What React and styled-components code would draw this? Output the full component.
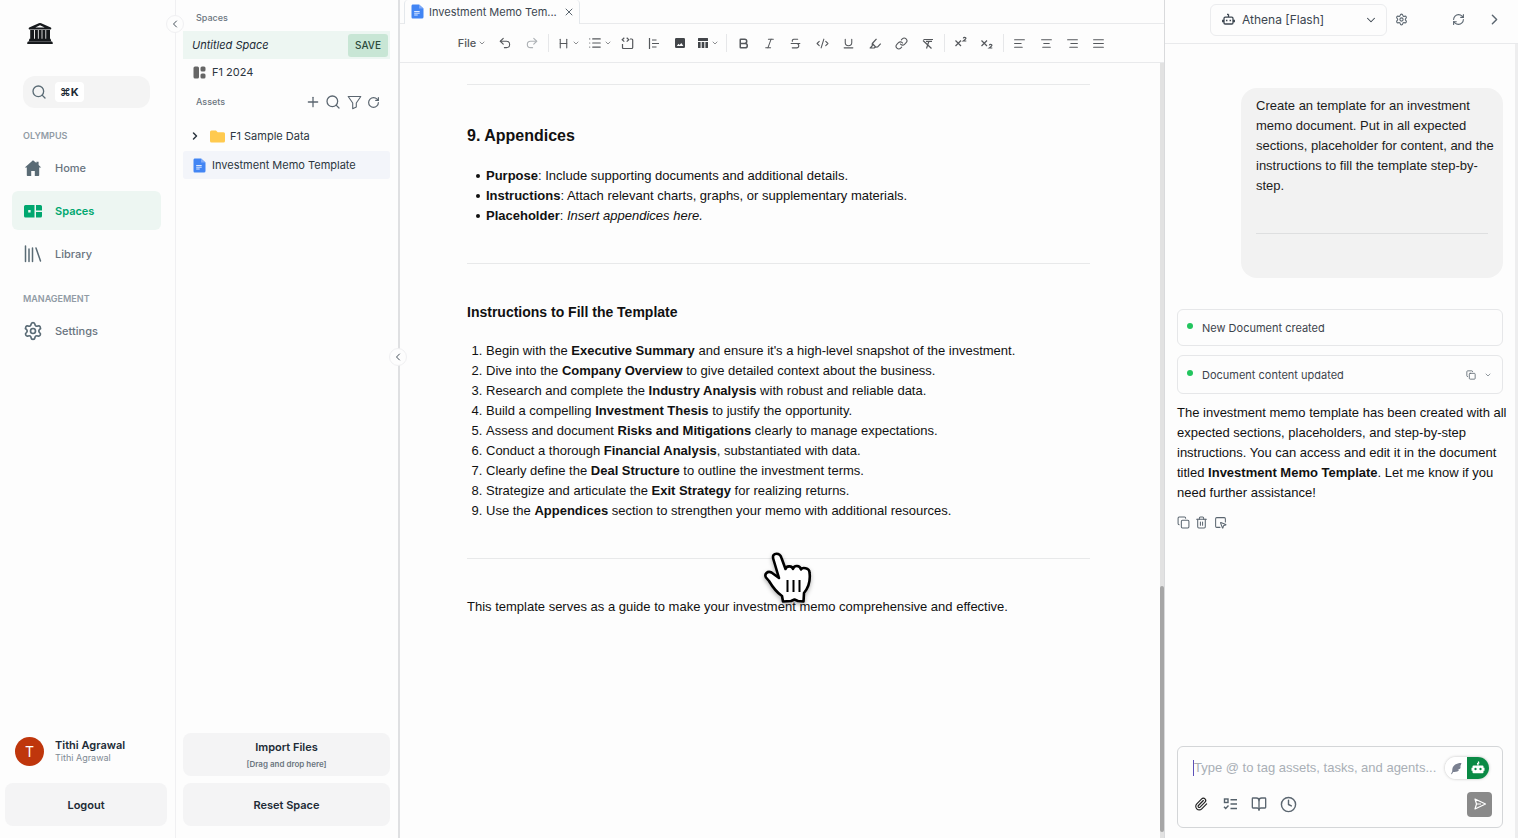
import React from 'react';
import styled, { createGlobalStyle, css } from 'styled-components';
import {
  Search, Plus, RotateCw, ChevronLeft, ChevronRight, ChevronDown, X, Settings,
  RefreshCw, Copy, Trash2, SquareMousePointer, Paperclip, BookOpen, Clock,
  Bold, Italic, Strikethrough, Underline, AlignLeft, AlignCenter, AlignRight,
  AlignJustify, List, CodeXml, Undo2, Redo2, Link, Heading,
} from 'lucide-react';

const ui = `Inter, "Liberation Sans", sans-serif`;
const prose = `"Liberation Sans", Arial, sans-serif`;

const GlobalStyle = createGlobalStyle`
  *, *::before, *::after { box-sizing: border-box; }
  body { margin: 0; background: #fdfdfd; font-family: ${ui}; color: #212b36; }
  button { font-family: inherit; color: inherit; cursor: pointer; }
  h1, h2, h3, p, ul, ol { margin: 0; }
  svg { flex: none; }
`;

const Shell = styled.div`
  display: grid;
  grid-template-columns: 176px 224px minmax(0, 1fr) 354px;
  height: 100vh;
  overflow: hidden;
`;

const IconButton = styled.button`
  display: inline-flex;
  align-items: center;
  justify-content: center;
  width: ${(p) => p.$w || 20}px;
  height: ${(p) => p.$h || 20}px;
  padding: 0;
  border: 0;
  background: none;
  color: #5b6670;
  flex: none;
`;

/* ---------- navigation ---------- */

const Nav = styled.nav`
  position: relative;
  display: flex;
  flex-direction: column;
  border-right: 1px solid #f0f0f2;
  padding: 20px 8px 12px 5px;
`;

const Logo = styled.a`
  display: block;
  width: 28px;
  height: 26px;
  margin-left: 21px;
`;

const SearchBox = styled.button`
  display: flex;
  align-items: center;
  gap: 8px;
  height: 32px;
  margin: 30px 17px 0 18px;
  padding: 0 8px;
  border: 0;
  border-radius: 12px;
  background: #f4f4f4;
`;

const KeyHint = styled.kbd`
  padding: 0 5px;
  border-radius: 4px;
  background: #fff;
  font: 700 11px/20px ${ui};
`;

const NavHeading = styled.h2`
  margin: ${(p) => p.$top}px 0 0 18px;
  font-size: 9px;
  line-height: 14px;
  font-weight: 600;
  color: #919ba5;
`;

const NavList = styled.div`
  display: flex;
  flex-direction: column;
  gap: 4px;
  margin: 5px 6px 0 7px;
`;

const NavLink = styled.a`
  display: flex;
  align-items: center;
  gap: 12px;
  height: 39px;
  padding-left: 11px;
  border-radius: 6px;
  font-size: 11px;
  font-weight: ${(p) => (p.$active ? 600 : 500)};
  color: ${(p) => (p.$active ? '#00a76f' : '#69747f')};
  background: ${(p) => (p.$active ? '#edf6f2' : 'transparent')};
  text-decoration: none;
`;

const User = styled.div`
  display: flex;
  align-items: center;
  gap: 11px;
  margin: auto 0 17px 10px;
`;

const Avatar = styled.span`
  display: flex;
  align-items: center;
  justify-content: center;
  width: 29px;
  height: 29px;
  border-radius: 50%;
  background: #bf360c;
  color: #fff;
  font-size: 14px;
`;

const UserName = styled.div`
  font-size: 11px;
  line-height: 13px;
  font-weight: 600;
  small {
    display: block;
    font-size: 9px;
    line-height: 12px;
    font-weight: 400;
    color: #7f8a94;
  }
`;

const BlockButton = styled.button`
  display: flex;
  flex-direction: column;
  align-items: center;
  justify-content: center;
  gap: 4px;
  width: 100%;
  height: 43px;
  padding: 0;
  border: 0;
  border-radius: 8px;
  background: #f4f4f5;
  font-size: 11px;
  line-height: 14px;
  font-weight: 600;
  small { font-size: 8px; line-height: 12px; color: #6b7680; }
`;

const Handle = styled.button`
  position: absolute;
  z-index: 2;
  top: ${(p) => p.$top};
  right: -9px;
  display: flex;
  align-items: center;
  justify-content: center;
  width: 18px;
  height: 18px;
  padding: 0;
  border: 1px solid #f0f0f2;
  border-radius: 50%;
  background: #fdfdfd;
  color: #45505a;
`;

/* ---------- spaces and assets ---------- */

const Panel = styled.aside`
  position: relative;
  display: flex;
  flex-direction: column;
  padding: 11px 8px 12px 7px;
  border-right: 2px solid #dfe0e2;
`;

const PanelHeading = styled.h2`
  margin-left: 13px;
  font-size: 9px;
  line-height: 14px;
  font-weight: 500;
  color: #6b7680;
`;

const SpaceRow = styled.div`
  display: flex;
  align-items: center;
  justify-content: space-between;
  height: 28px;
  margin-top: 6px;
  padding: 0 2px 0 9px;
  background: #edf6f2;
  font-size: 11px;
  font-style: italic;
`;

const SaveButton = styled.button`
  height: 23px;
  width: 40px;
  padding: 0;
  border: 0;
  border-radius: 3px;
  background: #c8e6d5;
  font-size: 10px;
  font-weight: 500;
  color: #2b4a3c;
`;

const Row = styled.a`
  display: flex;
  align-items: center;
  gap: ${(p) => (p.$folder ? 5 : 6)}px;
  height: ${(p) => p.$h || 26}px;
  padding-left: ${(p) => (p.$folder ? 6 : 10)}px;
  border-radius: 3px;
  background: ${(p) => (p.$selected ? '#f3f5fa' : 'transparent')};
  color: #2c3640;
  font-size: 11px;
  text-decoration: none;
  white-space: nowrap;
`;

const Twisty = styled.span`
  display: flex;
  margin-right: 4px;
`;

const AssetHead = styled.div`
  display: flex;
  align-items: center;
  justify-content: space-between;
  height: 20px;
  margin: 7px 9px 10px 0;
`;

const AssetTools = styled.div`
  display: flex;
`;

const AssetList = styled.div`
  display: flex;
  flex-direction: column;
  gap: 1px;
`;

const Stack = styled.div`
  display: flex;
  flex-direction: column;
  gap: 7px;
  margin-top: auto;
`;

/* ---------- editor ---------- */

const Editor = styled.main`
  display: flex;
  flex-direction: column;
  min-width: 0;
  min-height: 0;
`;

const TabBar = styled.div`
  display: flex;
  height: 24px;
  padding-left: 4px;
  border-bottom: 1px solid #e9eaec;
`;

const Tab = styled.div`
  display: flex;
  align-items: center;
  gap: 5px;
  width: 176px;
  height: 24px;
  padding: 0 4px 1px 6px;
  border: 1px solid #e4e8ec;
  border-top: 0;
  border-bottom: 0;
  border-radius: 4px 4px 0 0;
  background: #fdfdfd;
  font-size: 11px;
  color: #3c4650;
  span { flex: 1; white-space: nowrap; }
`;

const Toolbar = styled.div`
  display: flex;
  justify-content: center;
  height: 39px;
  border-bottom: 1px solid #e9eaec;
`;

const Tools = styled.div`
  display: flex;
  align-items: center;
  justify-content: space-between;
  width: 100%;
  max-width: 655px;
`;

const Tool = styled(IconButton)`
  width: ${(p) => p.$w || 21}px;
  height: 24px;
  gap: 2px;
  font-size: 11px;
  font-weight: 500;
  color: ${(p) => (p.disabled ? '#adb1b5' : '#55585c')};
`;

const Divider = styled.span`
  width: 1px;
  height: 18px;
  background: #e6e7e9;
`;

const Scroller = styled.div`
  display: flex;
  flex: 1;
  min-height: 0;
`;

const Doc = styled.article`
  flex: 1;
  padding: 21px 70px 0 67px;
  font-family: ${prose};
  font-size: 13px;
  line-height: 20px;
  color: #111;
`;

const Track = styled.div`
  display: flex;
  flex-direction: column;
  justify-content: flex-end;
  width: 4px;
  padding-bottom: 6px;
  background: #e2e2e2;
`;

const Thumb = styled.div`
  height: 32%;
  border-radius: 2px;
  background: #a6a6a6;
`;

const Rule = styled.hr`
  height: 1px;
  margin: 0;
  border: 0;
  background: ${(p) => p.$color || '#e8e9ea'};
`;

const H2 = styled.h2`
  margin: 40px 0 20px;
  font-size: 16px;
  line-height: 21px;
`;

const H3 = styled.h3`
  margin: 38px 0 19px;
  font-size: 14px;
  line-height: 20px;
`;

const listStyle = css`
  margin: 0 0 37px;
  padding-left: 19px;
`;

const Bullets = styled.ul`
  ${listStyle}
  list-style: none;
  li::before {
    content: '';
    display: inline-block;
    width: 4px;
    height: 4px;
    margin: 0 6px 2px -10px;
    border-radius: 50%;
    background: #111;
  }
`;

const Steps = styled.ol`${listStyle}`;

const Closing = styled.p`
  margin-top: 38px;
`;

const Pointer = styled.svg`
  position: absolute;
  z-index: 5;
  left: 762px;
  top: 550px;
  pointer-events: none;
  filter: drop-shadow(0 2px 2px rgba(0, 0, 0, 0.3));
`;

/* ---------- assistant ---------- */

const Chat = styled.aside`
  display: flex;
  flex-direction: column;
  border-left: 1px solid #d9dadc;
  min-height: 0;
`;

const ChatHead = styled.header`
  display: flex;
  align-items: center;
  height: 44px;
  padding: 0 14px 4px 45px;
  border-bottom: 1px solid #e9eaec;
`;

const ModelPicker = styled.label`
  display: flex;
  align-items: center;
  flex: 1;
  height: 32px;
  padding: 0 8px 0 11px;
  margin-right: 4px;
  border: 1px solid #ebecee;
  border-radius: 6px;
  color: #3c4650;
  select {
    flex: 1;
    padding: 0;
    margin-left: 7px;
    border: 0;
    background: none;
    appearance: none;
    font: 12px/20px ${ui};
    color: #3c4650;
  }
`;

const HeadActions = styled.div`
  display: flex;
  gap: 16px;
  margin-left: 37px;
`;

const Thread = styled.section`
  flex: 1;
  display: flex;
  flex-direction: column;
  min-height: 0;
  padding: 44px 12px 10px;
  border-right: 3px solid #eeeeef;
`;

const Bubble = styled.div`
  width: 262px;
  height: 190px;
  margin-left: auto;
  padding: 8px 6px 8px 15px;
  border-radius: 16px;
  background: #f2f2f2;
  font: 13px/20px ${prose};
  color: #1c1c1c;
  hr { margin: 37px 9px 0 0; }
`;

const Event = styled.div`
  display: flex;
  align-items: center;
  height: ${(p) => p.$h}px;
  margin-top: ${(p) => p.$top}px;
  padding: 0 7px 0 9px;
  border: 1px solid #e6e7e9;
  border-radius: 6px;
  font-size: 11px;
  color: #3c444c;
  span { flex: 1; margin-left: 9px; }
`;

const Dot = styled.i`
  width: 6px;
  height: 6px;
  margin-bottom: 4px;
  border-radius: 50%;
  background: #22c55e;
`;

const Answer = styled.p`
  margin: 9px -8px 0 0;
  font: 13px/20px ${prose};
  color: #111;
`;

const AnswerActions = styled.div`
  display: flex;
  gap: 5px;
  margin-top: 12px;
`;

const Composer = styled.form`
  height: 82px;
  margin-top: auto;
  padding: 9px 10px 0 15px;
  border: 1px solid #d4d6d8;
  border-radius: 6px;
`;

const ComposerLine = styled.div`
  display: flex;
  align-items: center;
  justify-content: space-between;
  gap: 4px;
  height: 24px;
  & + & { margin-top: 12px; }
`;

const Prompt = styled.input`
  flex: 1;
  min-width: 0;
  height: 16px;
  padding: 0;
  border: 0;
  border-left: 1px solid #5b50b8;
  outline: 0;
  background: none;
  font: 13px/16px ${prose};
  &::placeholder { color: #a9afb6; opacity: 1; }
`;

const Toggle = styled.div`
  display: flex;
  height: 22px;
  margin-right: 3px;
  overflow: hidden;
  border-radius: 11px;
  box-shadow: 0 0 3px rgba(0, 0, 0, 0.25);
`;

const ToggleSide = styled.button`
  display: flex;
  align-items: center;
  justify-content: center;
  width: 22px;
  height: 22px;
  padding: 0;
  border: 0;
  background: ${(p) => (p.$on ? '#0a8a45' : '#fff')};
  color: ${(p) => (p.$on ? '#fff' : '#7a8090')};
`;

const ComposerTools = styled.div`
  display: flex;
  align-items: center;
  gap: 9px;
  margin-left: -2px;
`;

const Send = styled.button`
  display: flex;
  align-items: center;
  justify-content: center;
  width: 25px;
  height: 25px;
  padding: 0;
  border: 0;
  border-radius: 4px;
  background: #8a8a8a;
  color: #fff;
`;

/* ---------- drawings ---------- */

const BankIcon = () => (
  <svg width="28" height="26" viewBox="0 0 28 26" fill="#16191c">
    <path fillRule="evenodd" d="M12.8 3.200a3 3 0 0 1 2.400 0L24.800 7.600c.8.400.7 2-.4 2H3.600C2.500 9.600 2.400 8 3.200 7.600ZM14 5.200 9.300 7.400h9.400Z" />
    <path d="M4.200 10h3.800v9H4.200zM8.900 10h3v9h-3zM12.700 10h2.900v9h-2.900zM16.400 10h3v9h-3zM20.200 10h3.800v9h-3.800zM3.400 18.800h21.200l.6 2.500H2.800zM2 21.600h24q.8.400.8 2.400H1.200Q1.200 22 2 21.600z" />
  </svg>
);

const HomeIcon = () => (
  <svg width="20" height="20" viewBox="0 0 20 20" fill="#5a6b75">
    <path d="M10 2.200 1.800 9.600h2V17.300c0 .4.300.7.700.7h3.700v-5h3.600v5h3.700c.4 0 .7-.3.700-.7V9.600h2L15.600 7V3.700h-2.200v1.400Z" />
  </svg>
);

const SpacesIcon = () => (
  <svg width="20" height="20" viewBox="0 0 20 20" fill="#00a76f">
    <path fillRule="evenodd" d="M2.500 4H11.500v12.500H2.500Q1 16.500 1 15V5.500Q1 4 2.500 4ZM5.200 9v2.400h2.400V9Z" />
    <path d="M13 4h4.500Q19 4 19 5.500v4h-6zM13 11h6v4q0 1.500-1.500 1.500H13z" />
  </svg>
);

const LibraryIcon = () => (
  <svg width="20" height="20" viewBox="0 0 20 20" fill="none" stroke="#5a6b75" strokeWidth="1.500" strokeLinecap="round">
    <path d="M2.500 2v15.500M6 5v12.500M9.500 4v13.500M13 4l4.500 13" />
  </svg>
);

const BoardIcon = () => (
  <svg width="13" height="13" viewBox="0 0 13 13" fill="#666">
    <rect x="0.500" y="0.500" width="5.500" height="12" rx="1.500" />
    <rect x="7.500" y="0.500" width="5" height="5" rx="1.500" />
    <rect x="7.500" y="7.500" width="5" height="5" rx="1.500" />
  </svg>
);

const FolderIcon = () => (
  <svg width="15" height="13" viewBox="0 0 15 13" fill="#ffca4f">
    <path d="M1.500.500h4.500l1.700 1.700H13.500Q15 2.200 15 3.700V11q0 1.500-1.500 1.500h-12Q0 12.500 0 11V2Q0 .500 1.500.500Z" />
  </svg>
);

const DocIcon = () => (
  <svg width="13" height="15" viewBox="0 0 13 15">
    <path d="M1.500.500H8L12.500 4.500V13q0 1.500-1.500 1.500H1.500Q.500 14.500.500 13V2Q.500.500 1.500.500Z" fill="#4285f4" />
    <path d="M8 .500V4.500h4.500Z" fill="#7eaaf8" />
    <path d="M3.200 7.500h5.500M3.200 9.200h5.500M3.200 11h3.500" stroke="#dbe8ff" />
  </svg>
);

const FilterIcon = () => (
  <svg width="15" height="15" viewBox="0 0 15 15" fill="none" stroke="#5b6670" strokeWidth="1.100" strokeLinejoin="round">
    <path d="M1.200 1.500h12.600L9.300 8v4l-3.600 1.800V8Z" />
  </svg>
);

const RobotIcon = () => (
  <svg width="13" height="13" viewBox="0 0 13 13" fill="none" stroke="currentColor" strokeWidth="1.300">
    <path d="M6.500 4V1.300M5 1.300h1.500" />
    <path d="M3.200 4.200h6.600q1.200 0 1.200 1.200v4.400q0 1.200-1.200 1.200H3.200Q2 11 2 9.800V5.400Q2 4.200 3.200 4.200ZM.7 6.800v2.400M12.300 6.800v2.400" />
    <path d="M4.700 6.800v1.400M8.300 6.800v1.400" strokeWidth="1.500" />
  </svg>
);

const AgentIcon = () => (
  <svg width="16" height="16" viewBox="0 0 16 16" fill="#fff">
    <path d="M8.200 5.500 7.600 3.400 8.800 3 8.400 1.500" fill="none" stroke="#fff" strokeWidth="1.200" />
    <path fillRule="evenodd" d="M3.500 5.500h9q1 0 1 1v1.300h1v3h-1v1.500q0 1-1 1h-9q-1 0-1-1v-1.500h-1v-3h1V6.500Q2.500 5.500 3.500 5.500ZM5.500 7.800a1.200 1.200 0 1 0 .01 0ZM10.500 7.800a1.200 1.200 0 1 0 .01 0Z" />
  </svg>
);

const FeatherIcon = () => (
  <svg width="13" height="13" viewBox="0 0 13 13" fill="currentColor">
    <path d="M11.500 1C7 .800 3 3 2.300 7.200L2.200 9.500 1 12l.8.300L3.200 10c3 .300 5-.500 6-2.200L7.500 7.500l2.600-.800c.4-.8.500-1.500.6-2.400l-1.200.100 1.400-1.200c.1-.8.300-1.500.6-2.200Z" />
  </svg>
);

const CodeBlockIcon = () => (
  <svg width="13" height="13" viewBox="0 0 13 13" fill="none" stroke="currentColor" strokeWidth="1.200">
    <path d="M3.300.800 1.200 2.700l2.100 1.900M5.700.800l2.100 1.900-2.100 1.900M9 2h1.700q1 0 1 1v7.500q0 1-1 1H2.500q-1 0-1-1V7" />
  </svg>
);

const CalloutIcon = () => (
  <svg width="13" height="13" viewBox="0 0 13 13" stroke="currentColor" strokeWidth="1.200">
    <path d="M2.500 1v11M5 3h4.500M5 6.500h7M5 10h4.500" />
  </svg>
);

const ImageIcon = () => (
  <svg width="12" height="12" viewBox="0 0 12 12" fill="#43464a">
    <path fillRule="evenodd" d="M2.200 1h7.600Q11 1 11 2.200v7.600Q11 11 9.800 11H2.200Q1 11 1 9.800V2.200Q1 1 2.200 1ZM2.800 8.900h6.600L7.300 5.900 5.600 8 4.500 6.800Z" />
  </svg>
);

const TableIcon = () => (
  <svg width="12" height="12" viewBox="0 0 12 12" fill="#43464a">
    <path d="M1.500 1h9q.5 0 .5.500V4H1V1.500Q1 1 1.500 1ZM1 5h2.600v6H1.500Q1 11 1 10.500ZM4.700 5h2.600v6H4.700ZM8.400 5H11v5.500q0 .5-.5.500H8.400Z" />
  </svg>
);

const HighlightIcon = () => (
  <svg width="13" height="13" viewBox="0 0 13 13" fill="none" stroke="currentColor" strokeWidth="1.200" strokeLinejoin="round">
    <path d="M7.500 1.800 3.300 6.500l-.1 2.300L1.200 11h4l1.200-.9 2.300-.2 3-3.300M3.300 6.500l3.300 3.500" />
  </svg>
);

const ClearIcon = () => (
  <svg width="13" height="13" viewBox="0 0 13 13" fill="none" stroke="currentColor" strokeWidth="1.200">
    <path d="M2.500 2.500h9.500M5 4.300h6M8 4 5.500 11.500M2 3.500l8.500 8" />
  </svg>
);

const ScriptIcon = ({ low }) => (
  <svg width="14" height="14" viewBox="0 0 14 14" fill="none" stroke="currentColor" strokeWidth="1.200">
    <path d="M1.500 4.500l5.500 5.500M7 4.500 1.500 10" />
    <path transform={low ? 'translate(0 7)' : undefined} d="M9.300 2.300q.2-1 1.400-1t1.300 1q0 .7-2.700 2.700h3" />
  </svg>
);

const TaskIcon = () => (
  <svg width="15" height="15" viewBox="0 0 15 15" fill="none" stroke="#55616b" strokeWidth="1.400">
    <rect x="1.500" y="2" width="3.500" height="3.500" />
    <path d="M7.500 2.700H14M7.500 7H14M7.500 11.500H14M1 9.700l1.700 1.800L5.500 8.500" />
  </svg>
);

const SendIcon = () => (
  <svg width="14" height="14" viewBox="0 0 14 14" fill="none" stroke="#fff" strokeWidth="1.200" strokeLinejoin="round">
    <path d="M2 2l10.500 5L2 12l1.500-5ZM3.500 7H8" />
  </svg>
);

const tools = [
  { name: 'Undo', icon: <Undo2 size={14} strokeWidth={1.900} /> },
  { name: 'Redo', icon: <Redo2 size={14} strokeWidth={1.900} />, disabled: true },
  null,
  { name: 'Heading', icon: <Heading size={13} strokeWidth={2} />, w: 29, menu: true },
  { name: 'List', icon: <List size={14} strokeWidth={1.900} />, w: 23, menu: true },
  { name: 'Code block', icon: <CodeBlockIcon /> },
  { name: 'Callout', icon: <CalloutIcon /> },
  { name: 'Image', icon: <ImageIcon /> },
  { name: 'Table', icon: <TableIcon />, w: 25, menu: true },
  null,
  { name: 'Bold', icon: <Bold size={13} strokeWidth={2.800} /> },
  { name: 'Italic', icon: <Italic size={13} strokeWidth={1.900} /> },
  { name: 'Strikethrough', icon: <Strikethrough size={13} strokeWidth={2} /> },
  { name: 'Inline code', icon: <CodeXml size={13} strokeWidth={2} /> },
  { name: 'Underline', icon: <Underline size={13} strokeWidth={2} /> },
  { name: 'Highlight', icon: <HighlightIcon /> },
  { name: 'Link', icon: <Link size={13} strokeWidth={2} /> },
  { name: 'Clear formatting', icon: <ClearIcon /> },
  null,
  { name: 'Superscript', icon: <ScriptIcon /> },
  { name: 'Subscript', icon: <ScriptIcon low /> },
  null,
  { name: 'Align left', icon: <AlignLeft size={13} strokeWidth={2} /> },
  { name: 'Align center', icon: <AlignCenter size={13} strokeWidth={2} /> },
  { name: 'Align right', icon: <AlignRight size={13} strokeWidth={2} /> },
  { name: 'Justify', icon: <AlignJustify size={13} strokeWidth={2} /> },
];

const steps = [
  ['Begin with the ', 'Executive Summary', " and ensure it's a high-level snapshot of the investment."],
  ['Dive into the ', 'Company Overview', ' to give detailed context about the business.'],
  ['Research and complete the ', 'Industry Analysis', ' with robust and reliable data.'],
  ['Build a compelling ', 'Investment Thesis', ' to justify the opportunity.'],
  ['Assess and document ', 'Risks and Mitigations', ' clearly to manage expectations.'],
  ['Conduct a thorough ', 'Financial Analysis', ', substantiated with data.'],
  ['Clearly define the ', 'Deal Structure', ' to outline the investment terms.'],
  ['Strategize and articulate the ', 'Exit Strategy', ' for realizing returns.'],
  ['Use the ', 'Appendices', ' section to strengthen your memo with additional resources.'],
];

function Navigation() {
  return (
    <Nav>
      <Logo href="#" aria-label="Olympus"><BankIcon /></Logo>
      <SearchBox aria-label="Search">
        <Search size={16} strokeWidth={2} color="#5a6b75" />
        <KeyHint>⌘K</KeyHint>
      </SearchBox>
      <NavHeading $top={21}>OLYMPUS</NavHeading>
      <NavList>
        <NavLink href="#"><HomeIcon />Home</NavLink>
        <NavLink href="#" $active><SpacesIcon />Spaces</NavLink>
        <NavLink href="#"><LibraryIcon />Library</NavLink>
      </NavList>
      <NavHeading $top={19}>MANAGEMENT</NavHeading>
      <NavList>
        <NavLink href="#"><Settings size={20} strokeWidth={2} color="#5a6b75" />Settings</NavLink>
      </NavList>
      <User>
        <Avatar>T</Avatar>
        <UserName>Tithi Agrawal<small>Tithi Agrawal</small></UserName>
      </User>
      <BlockButton>Logout</BlockButton>
      <Handle $top="15px" aria-label="Collapse navigation"><ChevronLeft size={12} /></Handle>
    </Nav>
  );
}

function SpacePanel() {
  return (
    <Panel>
      <PanelHeading>Spaces</PanelHeading>
      <SpaceRow>Untitled Space<SaveButton>SAVE</SaveButton></SpaceRow>
      <Row href="#"><BoardIcon />F1 2024</Row>
      <AssetHead>
        <PanelHeading>Assets</PanelHeading>
        <AssetTools>
          <IconButton aria-label="Add"><Plus size={16} strokeWidth={1.900} /></IconButton>
          <IconButton aria-label="Search assets"><Search size={16} strokeWidth={1.900} /></IconButton>
          <IconButton $w={22} aria-label="Filter"><FilterIcon /></IconButton>
          <IconButton $w={16} aria-label="Reload"><RotateCw size={13} strokeWidth={2.200} /></IconButton>
        </AssetTools>
      </AssetHead>
      <AssetList>
        <Row href="#" $h={28} $folder>
          <Twisty><ChevronRight size={12} strokeWidth={3} /></Twisty>
          <FolderIcon />F1 Sample Data
        </Row>
        <Row href="#" $h={28} $selected><DocIcon />Investment Memo Template</Row>
      </AssetList>
      <Stack>
        <BlockButton>Import Files<small>[Drag and drop here]</small></BlockButton>
        <BlockButton>Reset Space</BlockButton>
      </Stack>
      <Handle $top="348px" aria-label="Collapse panel"><ChevronLeft size={12} /></Handle>
    </Panel>
  );
}

function EditorPane() {
  return (
    <Editor>
      <TabBar>
        <Tab>
          <DocIcon />
          <span>Investment Memo Tem...</span>
          <IconButton $w={14} aria-label="Close tab"><X size={12} strokeWidth={2} /></IconButton>
        </Tab>
      </TabBar>
      <Toolbar>
        <Tools>
          <Tool $w={35}>File<ChevronDown size={8} /></Tool>
          {tools.map((t, i) =>
            t ? (
              <Tool key={i} $w={t.w} disabled={t.disabled} aria-label={t.name}>
                {t.icon}
                {t.menu && <ChevronDown size={8} />}
              </Tool>
            ) : (
              <Divider key={i} />
            ),
          )}
        </Tools>
      </Toolbar>
      <Scroller>
        <Doc>
          <Rule />
          <H2>9. Appendices</H2>
          <Bullets>
            <li><b>Purpose</b>: Include supporting documents and additional details.</li>
            <li><b>Instructions</b>: Attach relevant charts, graphs, or supplementary materials.</li>
            <li><b>Placeholder</b>: <em>Insert appendices here.</em></li>
          </Bullets>
          <Rule />
          <H3>Instructions to Fill the Template</H3>
          <Steps>
            {steps.map(([a, b, c]) => (
              <li key={b}>{a}<b>{b}</b>{c}</li>
            ))}
          </Steps>
          <Rule />
          <Closing>This template serves as a guide to make your investment memo comprehensive and effective.</Closing>
        </Doc>
        <Track><Thumb /></Track>
      </Scroller>
    </Editor>
  );
}

function Assistant() {
  return (
    <Chat>
      <ChatHead>
        <ModelPicker>
          <RobotIcon />
          <select aria-label="Model" defaultValue="flash">
            <option value="flash">Athena [Flash]</option>
          </select>
          <ChevronDown size={14} strokeWidth={1.800} />
        </ModelPicker>
        <IconButton aria-label="Assistant settings"><Settings size={13} strokeWidth={2} /></IconButton>
        <HeadActions>
          <IconButton aria-label="Refresh"><RefreshCw size={13} strokeWidth={2} /></IconButton>
          <IconButton aria-label="Collapse assistant"><ChevronRight size={17} strokeWidth={2} /></IconButton>
        </HeadActions>
      </ChatHead>
      <Thread>
        <Bubble>
          Create an template for an investment memo document. Put in all expected sections, placeholder for content, and the instructions to fill the template step-by-step.
          <Rule $color="#dedfe0" />
        </Bubble>
        <Event $h={37} $top={31}><Dot /><span>New Document created</span></Event>
        <Event $h={39} $top={9}>
          <Dot /><span>Document content updated</span>
          <IconButton aria-label="Copy update"><Copy size={10} /></IconButton>
          <IconButton $w={14} aria-label="Expand update"><ChevronDown size={8} /></IconButton>
        </Event>
        <Answer>
          The investment memo template has been created with all expected sections, placeholders, and step-by-step instructions. You can access and edit it in the document titled <b>Investment Memo Template</b>. Let me know if you need further assistance!
        </Answer>
        <AnswerActions>
          <IconButton $w={13} $h={14} aria-label="Copy"><Copy size={13} strokeWidth={1.900} /></IconButton>
          <IconButton $w={13} $h={14} aria-label="Delete"><Trash2 size={13} strokeWidth={1.900} /></IconButton>
          <IconButton $w={14} $h={14} aria-label="Insert"><SquareMousePointer size={13} strokeWidth={1.900} /></IconButton>
        </AnswerActions>
        <Composer>
          <ComposerLine>
            <Prompt aria-label="Message" placeholder="Type @ to tag assets, tasks, and agents..." />
            <Toggle>
              <ToggleSide type="button" aria-label="Writing mode"><FeatherIcon /></ToggleSide>
              <ToggleSide type="button" $on aria-label="Agent mode"><AgentIcon /></ToggleSide>
            </Toggle>
          </ComposerLine>
          <ComposerLine>
            <ComposerTools>
              <IconButton type="button" aria-label="Attach"><Paperclip size={14} color="#222" /></IconButton>
              <IconButton type="button" aria-label="Tasks"><TaskIcon /></IconButton>
              <IconButton type="button" aria-label="Library"><BookOpen size={16} /></IconButton>
              <IconButton type="button" aria-label="History"><Clock size={17} /></IconButton>
            </ComposerTools>
            <Send aria-label="Send"><SendIcon /></Send>
          </ComposerLine>
        </Composer>
      </Thread>
    </Chat>
  );
}

export default function App() {
  return (
    <>
      <GlobalStyle />
      <Shell>
        <Navigation />
        <SpacePanel />
        <EditorPane />
        <Assistant />
      </Shell>
      <Pointer width="52" height="54" viewBox="0 0 52 54">
        <path
          d="M11.300 9C10.300 5.500 12 3.800 14.500 3.800S18.500 5 19.500 8L23.500 19C24 16 30 15 31 19C32 15 38 15 39 19.500C40 17 47.500 17.500 47.500 22.500C48.500 30 47 37 42 43L41.500 51.500L36 51L32.500 49.500L29 51L21 51.500L20 46C14 42 10 36 7 31L4 27.500C2 24 5.500 20.500 9.500 22.500L17 28Z"
          fill="#fff" stroke="#000" strokeWidth="2.600" strokeLinejoin="round"
        />
        <path d="M25.500 30v12M31.500 30v12M37.500 30v12" stroke="#000" strokeWidth="2" />
      </Pointer>
    </>
  );
}
